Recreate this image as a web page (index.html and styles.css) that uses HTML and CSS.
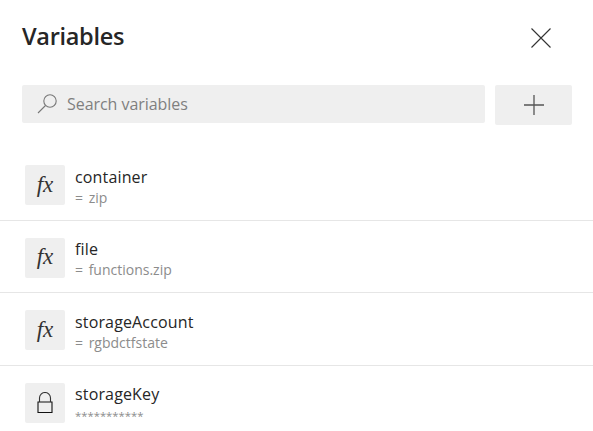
FILE: index.html
```html
<!DOCTYPE html>
<html lang="en">
<head>
<meta charset="utf-8">
<title>Variables</title>
<link rel="stylesheet" href="styles.css">
</head>
<body>
<main class="panel">
  <header class="header">
    <h1 class="title">Variables</h1>
    <button class="close" aria-label="Close">
      <svg width="20" height="20" viewBox="0 0 20 20"><path d="M0.500 0.500L19.500 19.500M19.500 0.500L0.500 19.500" stroke="#333" stroke-width="1.100" fill="none"/></svg>
    </button>
  </header>
  <div class="toolbar">
    <div class="search">
      <svg class="search-icon" width="21" height="20" viewBox="0 0 21 20"><circle cx="13" cy="7" r="6.200" stroke="#777" stroke-width="1.100" fill="none"/><path d="M8.500 11.500L1 19" stroke="#777" stroke-width="1.100" fill="none"/></svg>
      <span class="placeholder">Search variables</span>
    </div>
    <button class="add" aria-label="Add">
      <svg width="20" height="20" viewBox="0 0 20 20"><path d="M10 0V20M0 10H20" stroke="#555" stroke-width="1.300" fill="none"/></svg>
    </button>
  </div>
  <ul class="list">
    <li class="row">
      <div class="badge"><span class="fx">fx</span></div>
      <div class="info"><div class="name">container</div><div class="value">= zip</div></div>
    </li>
    <li class="row">
      <div class="badge"><span class="fx">fx</span></div>
      <div class="info"><div class="name">file</div><div class="value">= functions.zip</div></div>
    </li>
    <li class="row">
      <div class="badge"><span class="fx">fx</span></div>
      <div class="info"><div class="name">storageAccount</div><div class="value">= rgbdctfstate</div></div>
    </li>
    <li class="row">
      <div class="badge">
        <svg width="16" height="21" viewBox="0 0 16 21"><path d="M1 10H15V20.500H1Z" stroke="#111" stroke-width="1.100" fill="none"/><path d="M2.500 10V6A5.500 5.500 0 0 1 13.500 6V10" stroke="#333" stroke-width="1.100" fill="none"/></svg>
      </div>
      <div class="info"><div class="name">storageKey</div><div class="value secret">***********</div></div>
    </li>
  </ul>
</main>
</body>
</html>
```
FILE: styles.css
```css
* { box-sizing: border-box; }
html, body { margin: 0; padding: 0; background: #fff; height: 100%; overflow: hidden; }
body { font-family: "Open Sans", "Noto Sans", "Liberation Sans", sans-serif; color: #262626; }
.panel { width: 593px; height: 431px; overflow: hidden; }
.header { display: flex; justify-content: space-between; align-items: flex-start; padding: 20px 42px 0 22px; height: 85px; }
.title { margin: 0; font-size: 23.500px; line-height: 32px; font-weight: 600; color: #262626; letter-spacing: -0.300px; }
.close { border: 0; background: none; padding: 0; width: 20px; height: 20px; margin-top: 8px; display: block; }
.close svg, .add svg { display: block; }
.toolbar { display: flex; gap: 10px; padding: 0 21px 0 22px; align-items: flex-start; }
.search { flex: 1; height: 38px; background: #efefef; border-radius: 2px; display: flex; align-items: center; padding-left: 15px; gap: 9px; }
.placeholder { font-size: 16px; color: #7f7f7f; letter-spacing: -0.050px; }
.add { width: 77px; height: 40px; border: 0; border-radius: 2px; background: #efefef; padding: 0; display: flex; align-items: center; justify-content: center; }
.list { list-style: none; margin: 23px 0 0; padding: 0; }
.row { height: 72.670px; display: flex; align-items: flex-start; padding: 17px 0 0 25px; gap: 10px; border-bottom: 1px solid #e6e6e6; }
.row:last-child { border-bottom: 0; }
.badge { width: 40px; height: 40px; background: #efefef; border-radius: 2px; display: flex; align-items: center; justify-content: center; }
.fx { font-family: "Liberation Serif", serif; font-style: italic; font-size: 23px; color: #333; line-height: 1; padding-bottom: 2px; }
.info { display: flex; flex-direction: column; margin-top: 0.500px; }
.name { font-size: 16px; line-height: 22px; color: #262626; letter-spacing: 0.150px; }
.value { font-size: 14px; line-height: 19px; color: #8c8c8c; word-spacing: 2px; }
.secret { font-size: 11.300px; line-height: 21px; }
```
